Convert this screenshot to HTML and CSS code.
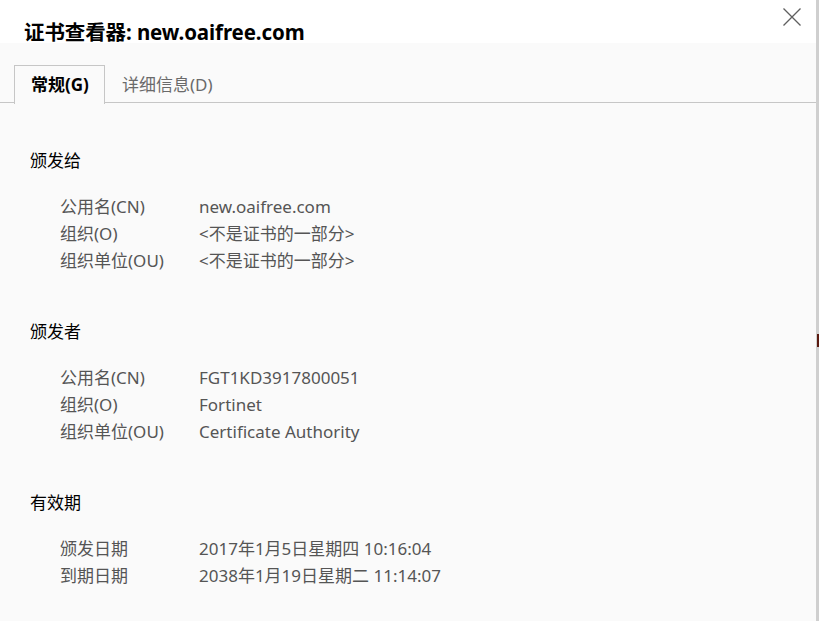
FILE: index.html
```html
<!DOCTYPE html>
<html lang="zh-CN">
<head>
<meta charset="utf-8">
<title>证书查看器</title>
<link rel="stylesheet" href="styles.css">
</head>
<body>
<div class="window">
  <div class="dialog">
    <header class="header">
      <h1 class="title">证书查看器: new.oaifree.com</h1>
      <button class="close" aria-label="关闭">
        <svg width="20" height="20" viewBox="0 0 20 20"><path d="M1.5 1.5 L18.5 18.5 M18.5 1.5 L1.5 18.5" stroke="#5f5f5f" stroke-width="1.3" fill="none"/></svg>
      </button>
    </header>
    <div class="body">
      <nav class="tabs">
        <div class="tab active">常规(G)</div>
        <div class="tab">详细信息(D)</div>
      </nav>
      <div class="content">
        <section class="section">
          <h2 class="heading">颁发给</h2>
          <div class="rows">
            <div class="label">公用名(CN)</div><div class="value">new.oaifree.com</div>
            <div class="label">组织(O)</div><div class="value">&lt;不是证书的一部分&gt;</div>
            <div class="label">组织单位(OU)</div><div class="value">&lt;不是证书的一部分&gt;</div>
          </div>
        </section>
        <section class="section">
          <h2 class="heading">颁发者</h2>
          <div class="rows">
            <div class="label">公用名(CN)</div><div class="value">FGT1KD3917800051</div>
            <div class="label">组织(O)</div><div class="value">Fortinet</div>
            <div class="label">组织单位(OU)</div><div class="value">Certificate Authority</div>
          </div>
        </section>
        <section class="section">
          <h2 class="heading">有效期</h2>
          <div class="rows">
            <div class="label">颁发日期</div><div class="value">2017年1月5日星期四 10:16:04</div>
            <div class="label">到期日期</div><div class="value">2038年1月19日星期二 11:14:07</div>
          </div>
        </section>
      </div>
    </div>
  </div>
  <div class="edge"><span class="edge-mark"></span></div>
</div>
</body>
</html>
```
FILE: styles.css
```css
* { box-sizing: border-box; }
html, body {
  margin: 0;
  padding: 0;
  height: 100%;
  overflow: hidden;
}
body {
  font-family: "Noto Sans", "Noto Sans CJK SC", sans-serif;
  background: #fafafa;
  color: #000;
}
.window {
  display: flex;
  height: 621px;
  width: 819px;
}
.dialog {
  flex: 1;
  display: flex;
  flex-direction: column;
  background: #fafafa;
}
.header {
  height: 43px;
  background: #fff;
  display: flex;
  justify-content: space-between;
  align-items: flex-start;
  padding-left: 24px;
  padding-right: 14px;
}
.title {
  margin: 0;
  padding-top: 18px;
  font-size: 20.5px;
  line-height: 29px;
  font-weight: 700;
  letter-spacing: -0.1px;
  color: #000;
  white-space: nowrap;
}
.close {
  margin-top: 7px;
  border: 0;
  background: none;
  padding: 0;
  width: 20px;
  height: 20px;
  cursor: pointer;
}
.close svg { display: block; }
.body {
  flex: 1;
  display: flex;
  flex-direction: column;
}
.tabs {
  display: flex;
  padding-top: 22px;
  padding-left: 14px;
  border-bottom: 1px solid #c6c6c6;
  height: 60px;
}
.tab {
  height: 38px;
  padding: 0 16px;
  font-size: 17px;
  line-height: 38px;
  color: #6a6a6a;
  border: 1px solid transparent;
  border-bottom: 0;
  margin-bottom: -1px;
  white-space: nowrap;
}
.tab.active {
  width: 91px;
  color: #000;
  font-weight: 700;
  background: #fafafa;
  border-color: #c6c6c6;
  height: 39px;
}
.content {
  padding: 44px 0 0 30px;
  display: flex;
  flex-direction: column;
  gap: 44px;
}
.heading {
  margin: 0;
  font-size: 17px;
  font-weight: 400;
  line-height: 27px;
  color: #000;
}
.rows {
  margin-top: 19px;
  padding-left: 30px;
  display: grid;
  grid-template-columns: 139px auto;
  grid-auto-rows: 27px;
  font-size: 17px;
  line-height: 27px;
  color: #555;
}
.edge {
  width: 3px;
  background: #cfcfcf;
  position: relative;
}
.edge-mark {
  position: absolute;
  left: 1px;
  top: 334px;
  width: 2px;
  height: 13px;
  background: #5a1a10;
}
```
